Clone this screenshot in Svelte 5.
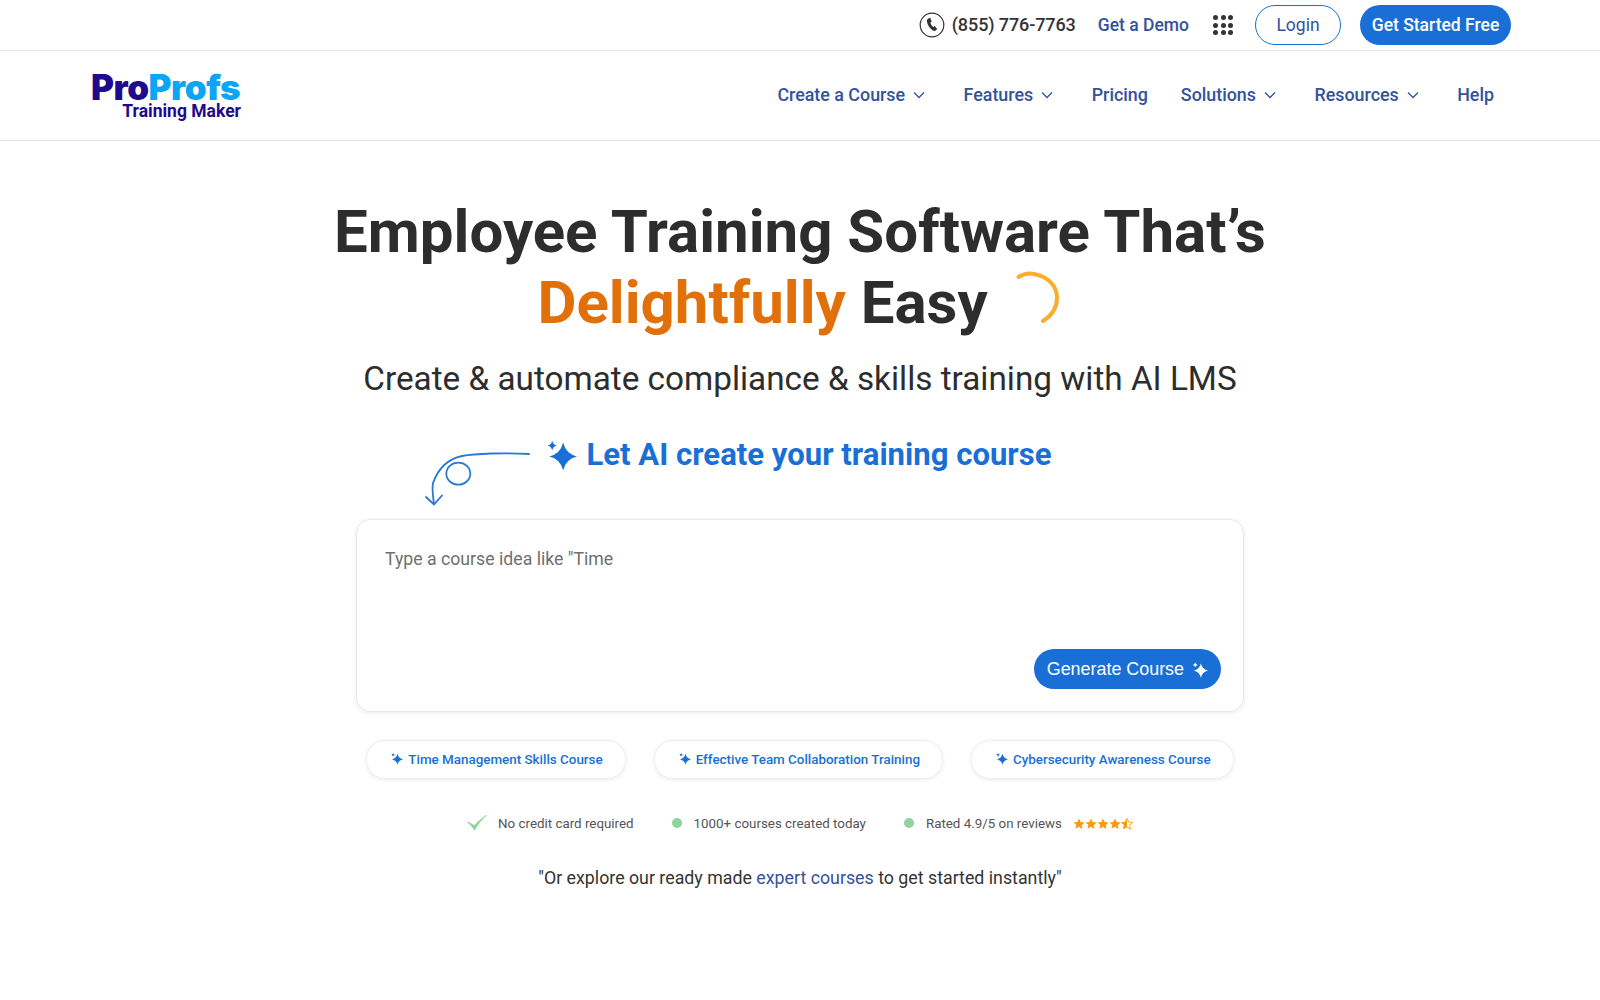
<script lang="ts">
	const navItems = [
		{ label: 'Create a Course', caret: true },
		{ label: 'Features', caret: true },
		{ label: 'Pricing', caret: false },
		{ label: 'Solutions', caret: true },
		{ label: 'Resources', caret: true },
		{ label: 'Help', caret: false }
	];
	const chips = [
		'Time Management Skills Course',
		'Effective Team Collaboration Training',
		'Cybersecurity Awareness Course'
	];
	const sparkle = 'M14.500 4.500Q16.300 12.200 24 14 16.300 15.800 14.500 23.500 12.700 15.800 5 14 12.700 12.200 14.500 4.500z M7 3Q7.500 6 10.300 6.500 7.500 7 7 10 6.500 7 3.700 6.500 6.500 6 7 3z';
	const star = 'M6 .5l1.700 3.600 3.900.5-2.900 2.700.8 3.900L6 8.800l-3.500 1.900.8-3.900L.4 4.600l3.900-.5z';
</script>

<div class="page">
	<div class="topbar">
		<svg class="phone" viewBox="0 0 26 26" width="26" height="26">
			<circle cx="13" cy="13" r="11.800" fill="none" stroke="#333" stroke-width="1.200" />
			<path d="M9.200 6.500l2 -.7 1.500 3.700-1.300 1.200c.5 1.600 1.400 3 2.800 4.200l1.500-.8 2.500 3-1.600 1.500c-.8.600-1.800.5-2.700 0-3.600-2.300-5.600-5.700-6-9.500-.1-1.200.5-2 1.300-2.600z" fill="#333" />
		</svg>
		<span class="tel">(855) 776-7763</span>
		<a class="demo" href="#demo">Get a Demo</a>
		<div class="apps">
			{#each Array(9) as _}<i></i>{/each}
		</div>
		<a class="btn login" href="#login">Login</a>
		<a class="btn start" href="#start">Get Started Free</a>
	</div>

	<header class="mainnav">
		<div class="logo">
			<div class="logo-main"><span class="pro">Pro</span><span class="profs">Profs</span></div>
			<div class="logo-sub">Training Maker</div>
		</div>
		<nav>
			{#each navItems as item}
				<a href="#nav" class:has-caret={item.caret}>
					{item.label}
					{#if item.caret}
						<svg viewBox="0 0 12 8" width="12" height="8"><path d="M1 1.500l5 5 5-5" fill="none" stroke="#34529b" stroke-width="1.300" /></svg>
					{/if}
				</a>
			{/each}
		</nav>
	</header>

	<main>
		<h1>
			Employee Training Software That’s<br />
			<span class="orange">Delightfully</span> Easy
			<svg class="spinner" viewBox="0 0 44 54" width="44" height="54">
				<path d="M2.500 6C8 2.500 13 2 18 3c14 2.500 23 12 23 24 0 10-6 18-14 23" fill="none" stroke="#fbad2c" stroke-width="4" stroke-linecap="round" />
			</svg>
		</h1>
		<p class="sub">Create &amp; automate compliance &amp; skills training with AI LMS</p>

		<div class="ai-line">
			<svg class="arrow" viewBox="0 0 115 65" width="115" height="65">
				<path d="M109 9C85 7.500 55 8.500 42 11 28 14 18 24 13 38c-1 5 0 14 1 21" fill="none" stroke="#2a78d6" stroke-width="1.800" stroke-linecap="round" />
				<ellipse cx="38.300" cy="28.700" rx="12" ry="11" fill="none" stroke="#2a78d6" stroke-width="1.800" />
				<path d="M6 52l8 7.500 8-9" fill="none" stroke="#2a78d6" stroke-width="1.800" stroke-linecap="round" />
			</svg>
			<svg class="spark-lg" viewBox="0 0 24 24" width="35" height="35"><path d={sparkle} fill="#1a6fd6" /></svg>
			<span>Let AI create your training course</span>
		</div>

		<div class="card">
			<div class="placeholder">Type a course idea like "Time</div>
			<button class="generate">
				Generate Course
				<svg viewBox="0 0 24 24" width="18" height="18"><path d={sparkle} fill="#fff" /></svg>
			</button>
		</div>

		<div class="chips">
			{#each chips as chip}
				<div class="chip">
					<svg viewBox="0 0 24 24" width="14" height="14"><path d={sparkle} fill="#1a6fd6" /></svg>
					{chip}
				</div>
			{/each}
		</div>

		<div class="status">
			<div class="item">
				<svg viewBox="0 0 20 16" width="20" height="16"><path d="M0 7c3 1 5 2 7.500 3.500C10 7 15 3 20 0 15 4 11 9 7.500 15.500 5.500 12 3 9 0 7z" fill="#8ed49b" stroke="#8ed49b" stroke-width=".5" /></svg>
				<span class="check-text">No credit card required</span>
			</div>
			<div class="item"><i class="dot"></i>1000+ courses created today</div>
			<div class="item">
				<i class="dot"></i>Rated 4.9/5 on reviews
				<span class="stars">
					{#each [0, 1, 2, 3] as _}
						<svg viewBox="0 0 12 12" width="12" height="12"><path d={star} fill="#fb9a0e" /></svg>
					{/each}
					<svg viewBox="0 0 12 12" width="12" height="12">
						<path d={star} fill="none" stroke="#fb9a0e" stroke-width=".9" />
						<path d="M6 .5v8.300l-3.500 1.900.8-3.900L.4 4.600l3.900-.5z" fill="#fb9a0e" />
					</svg>
				</span>
			</div>
		</div>

		<p class="explore">"Or explore our ready made <a href="#courses">expert courses</a> to get started instantly"</p>
	</main>
</div>

<style>
	:global(body) {
		margin: 0;
		background: #fff;
	}

	.page {
		font-family: Roboto, sans-serif;
		color: #2d2d2d;
		height: 1000px;
		overflow: hidden;
	}

	a {
		text-decoration: none;
	}

	.topbar {
		display: flex;
		align-items: center;
		justify-content: flex-end;
		height: 50px;
		padding-right: 89px;
		border-bottom: 1px solid #e6e8ee;
	}

	.phone {
		margin-right: 7px;
	}

	.tel {
		font-size: 18px;
		font-weight: 500;
		line-height: 48px;
		height: 48px;
		color: #333;
		letter-spacing: -0.1px;
		margin-right: 22px;
		margin-bottom: 1px;
	}

	.demo {
		font-size: 17.500px;
		font-weight: 500;
		line-height: 48px;
		height: 48px;
		color: #34529b;
		margin-right: 24px;
		margin-bottom: 1px;
	}

	.apps {
		display: grid;
		grid-template-columns: repeat(3, 5px);
		gap: 2.500px;
		margin-right: 22px;
	}

	.apps i {
		width: 5px;
		height: 5px;
		border-radius: 50%;
		background: #333;
	}

	.btn {
		display: flex;
		align-items: center;
		justify-content: center;
		height: 40px;
		box-sizing: border-box;
		border-radius: 20px;
		font-size: 17.500px;
		padding-bottom: 1px;
	}

	.login {
		width: 86px;
		border: 1px solid #1a6fd6;
		color: #34529b;
		margin-right: 19px;
	}

	.start {
		width: 151px;
		background: #1a6fd6;
		color: #fff;
		font-weight: 500;
	}

	.mainnav {
		display: flex;
		align-items: center;
		justify-content: space-between;
		height: 89px;
		padding: 0 106px 0 91px;
		border-bottom: 1px solid #e2e4e8;
	}

	.logo {
		width: 150px;
	}

	.logo-main {
		font-family: Inter, sans-serif;
		font-weight: 900;
		font-size: 35px;
		line-height: 31px;
		letter-spacing: -0.450px;
		white-space: nowrap;
	}

	.pro {
		color: #1f0a8c;
	}

	.profs {
		color: #0ba5f5;
	}

	.logo-sub {
		font-size: 17.500px;
		font-weight: 700;
		line-height: 18px;
		color: #1f0a8c;
		text-align: right;
		white-space: nowrap;
		margin-top: -1px;
	}

	nav {
		display: flex;
		align-items: center;
		gap: 33px;
		margin-bottom: 2px;
	}

	nav a {
		display: flex;
		align-items: center;
		gap: 8px;
		font-size: 17.850px;
		font-weight: 500;
		color: #34529b;
	}

	nav a.has-caret {
		margin-right: 5.500px;
	}

	main {
		display: flex;
		flex-direction: column;
		align-items: center;
	}

	h1 {
		font-size: 60px;
		font-weight: 700;
		line-height: 71px;
		margin: 55px 0 0;
		text-align: center;
		color: #2d2d2d;
	}

	.orange {
		color: #e2700a;
	}

	.spinner {
		display: inline-block;
		vertical-align: -2px;
		margin: 0 3px 0 13px;
	}

	.sub {
		font-size: 33.300px;
		line-height: 40px;
		margin: 21px 0 0;
	}

	.ai-line {
		position: relative;
		display: flex;
		align-items: center;
		gap: 9px;
		font-size: 31.100px;
		font-weight: 700;
		color: #1a6fd6;
		margin: 35px 6px 0 0;
		height: 40px;
	}

	.arrow {
		position: absolute;
		left: -122px;
		top: 11px;
	}

	.spark-lg {
		margin-top: -2px;
	}

	.card {
		position: relative;
		box-sizing: border-box;
		width: 888px;
		height: 193px;
		margin-top: 45px;
		border: 1px solid #e8e8ea;
		border-radius: 14px;
		box-shadow: 0 1px 4px rgba(0, 0, 0, 0.08);
		padding: 28px;
	}

	.placeholder {
		font-size: 17.700px;
		line-height: 22px;
		color: #6f6f6f;
	}

	.generate {
		position: absolute;
		right: 22px;
		bottom: 22px;
		display: flex;
		align-items: center;
		gap: 6px;
		height: 40px;
		padding: 0 13px;
		border: none;
		border-radius: 20px;
		background: #1a6fd6;
		color: #fff;
		font-family: 'Liberation Sans', sans-serif;
		font-size: 17.900px;
	}

	.chips {
		display: flex;
		gap: 28px;
		margin-top: 28px;
	}

	.chip {
		display: flex;
		align-items: center;
		gap: 5px;
		height: 37px;
		padding: 0 22px;
		border: 1px solid #eceef0;
		border-radius: 19px;
		box-shadow: 0 1px 4px rgba(0, 0, 0, 0.08);
		font-size: 13.400px;
		font-weight: 500;
		color: #1a6fd6;
	}

	.chip svg {
		margin-bottom: 3px;
	}

	.status {
		display: flex;
		align-items: center;
		gap: 38px;
		margin-top: 35px;
		font-size: 13.350px;
		color: #555;
		height: 18px;
	}

	.item {
		display: flex;
		align-items: center;
	}

	.check-text {
		margin-left: 11px;
	}

	.dot {
		width: 10px;
		height: 10px;
		border-radius: 50%;
		background: #8ed49b;
		margin-right: 12px;
	}

	.stars {
		display: flex;
		margin: 1px 0 0 11px;
	}

	.explore {
		font-size: 17.800px;
		line-height: 22px;
		margin: 35px 0 0;
		color: #333;
	}

	.explore a {
		color: #34529b;
	}
</style>
